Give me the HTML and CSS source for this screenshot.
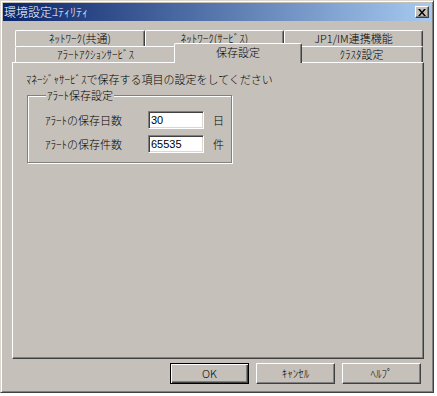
FILE: index.html
```html
<!DOCTYPE html>
<html lang="ja">
<head>
<meta charset="utf-8">
<title>環境設定ﾕﾃｨﾘﾃｨ</title>
<link rel="stylesheet" href="styles.css">
</head>
<body>
<div class="window">
  <div class="titlebar">
    <span class="title">環境設定ﾕﾃｨﾘﾃｨ</span>
    <span class="close"><svg width="8" height="7" viewBox="0 0 8 7"><path d="M0 0h2l2 2.5L6 0h2L5 3.5 8 7H6L4 4.5 2 7H0l3-3.5z" fill="#000"/></svg></span>
  </div>
  <div class="body">
    <div class="tabs">
      <div class="tabrow">
        <div class="tab t1">ﾈｯﾄﾜｰｸ(共通)</div>
        <div class="tab t2">ﾈｯﾄﾜｰｸ(ｻｰﾋﾞｽ)</div>
        <div class="tab t3">JP1/IM連携機能</div>
      </div>
      <div class="tabrow">
        <div class="tab t4">ｱﾗｰﾄｱｸｼｮﾝｻｰﾋﾞｽ</div>
        <div class="tab t5 selected">保存設定</div>
        <div class="tab t6">ｸﾗｽﾀ設定</div>
      </div>
    </div>
    <div class="panel">
      <p class="desc">ﾏﾈｰｼﾞｬｻｰﾋﾞｽで保存する項目の設定をしてください</p>
      <fieldset class="group">
        <legend class="legend">ｱﾗｰﾄ保存設定</legend>
        <div class="grid">
          <span class="label">ｱﾗｰﾄの保存日数</span>
          <span class="input">30</span>
          <span class="unit">日</span>
          <span class="label">ｱﾗｰﾄの保存件数</span>
          <span class="input">65535</span>
          <span class="unit">件</span>
        </div>
      </fieldset>
    </div>
    <div class="buttons">
      <div class="btn default"><span class="btn-inner">OK</span></div>
      <div class="btn"><span class="btn-inner">ｷｬﾝｾﾙ</span></div>
      <div class="btn"><span class="btn-inner">ﾍﾙﾌﾟ</span></div>
    </div>
  </div>
</div>
</body>
</html>
```
FILE: styles.css
```css
* { box-sizing: border-box; }
html, body { margin: 0; padding: 0; background: #ffffff; }
body {
  font-family: "Noto Sans CJK JP", "Liberation Sans", sans-serif;
  font-size: 11px;
  font-weight: 300;
  color: #000;
}
.window {
  width: 434px;
  height: 393px;
  background: #c5c1ba;
  border: 1px solid;
  border-color: #dcd8d0 #404040 #404040 #dcd8d0;
  box-shadow: inset 1px 1px #ffffff, inset -1px -1px #808080;
  padding: 2px;
  display: flex;
  flex-direction: column;
}
.titlebar {
  height: 18px;
  background: linear-gradient(to right, #0a246a, #a6caf0);
  display: flex;
  align-items: center;
  justify-content: space-between;
  padding: 0 2px 0 1px;
}
.title {
  color: #ffffff;
  font-size: 12px;
  line-height: 14px;
}
.close {
  width: 14px;
  height: 12px;
  background: #c5c1ba;
  border: 1px solid;
  border-color: #ffffff #404040 #404040 #ffffff;
  box-shadow: inset -1px -1px #808080;
  display: flex;
  align-items: center;
  justify-content: center;
}
.body {
  flex: 1;
  display: flex;
  flex-direction: column;
  padding: 9px 7px 0 9px;
}
.tabs {
  display: flex;
  flex-direction: column;
  padding-left: 3px;
}
.tabrow {
  display: flex;
  height: 16px;
}
.tab {
  height: 16px;
  border-top: 1px solid #ffffff;
  border-left: 1px solid #ffffff;
  border-right: 1px solid #404040;
  box-shadow: inset -1px 0 #808080;
  border-radius: 2px 2px 0 0;
  display: flex;
  align-items: center;
  justify-content: center;
  line-height: 13px;
  background: #c5c1ba;
}
.t1 { width: 130px; }
.t2 { width: 139px; }
.t3 { width: 139px; }
.t4 { width: 161px; }
.t5 { width: 124px; }
.t6 { width: 123px; }
.tab.selected {
  position: relative;
  z-index: 2;
  width: 128px;
  height: 20px;
  margin: -3px -2px 0 -2px;
  padding-bottom: 2px;
}
.panel {
  position: relative;
  z-index: 1;
  height: 297px;
  border: 1px solid;
  border-color: #ffffff #404040 #404040 #ffffff;
  box-shadow: inset -1px -1px #808080;
  padding: 10px 0 0 13px;
}
.desc {
  margin: 0;
  line-height: 13px;
}
.group {
  margin: 3px 0 0 1px;
  width: 205px;
  border: 1px solid #808080;
  box-shadow: inset 1px 1px #ffffff, 1px 1px #ffffff;
  padding: 9px 0 9px 17px;
}
.legend {
  padding: 0 1px;
  margin-left: 1px;
  line-height: 13px;
  background: #c5c1ba;
}
.grid {
  display: grid;
  grid-template-columns: 94px 56px auto;
  column-gap: 9px;
  row-gap: 6px;
  align-items: center;
}
.input {
  height: 18px;
  background: #ffffff;
  border: 1px solid;
  border-color: #808080 #ffffff #ffffff #808080;
  box-shadow: inset 1px 1px #404040, inset -1px -1px #dcd8d0;
  font-family: "Liberation Sans", sans-serif;
  font-weight: 400;
  font-size: 11px;
  line-height: 16px;
  padding-left: 2px;
}
.buttons {
  display: flex;
  justify-content: flex-end;
  gap: 7px;
  padding: 4px 3px 0 0;
}
.btn {
  width: 79px;
  height: 21px;
  border: 1px solid;
  border-color: #ffffff #404040 #404040 #ffffff;
  box-shadow: inset -1px -1px #808080;
  display: flex;
  align-items: center;
  justify-content: center;
}
.btn.default {
  border: 1px solid #000000;
  box-shadow: inset 1px 1px #ffffff, inset -1px -1px #404040, inset -2px -2px #808080;
}
.btn-inner {
  line-height: 13px;
}
```
